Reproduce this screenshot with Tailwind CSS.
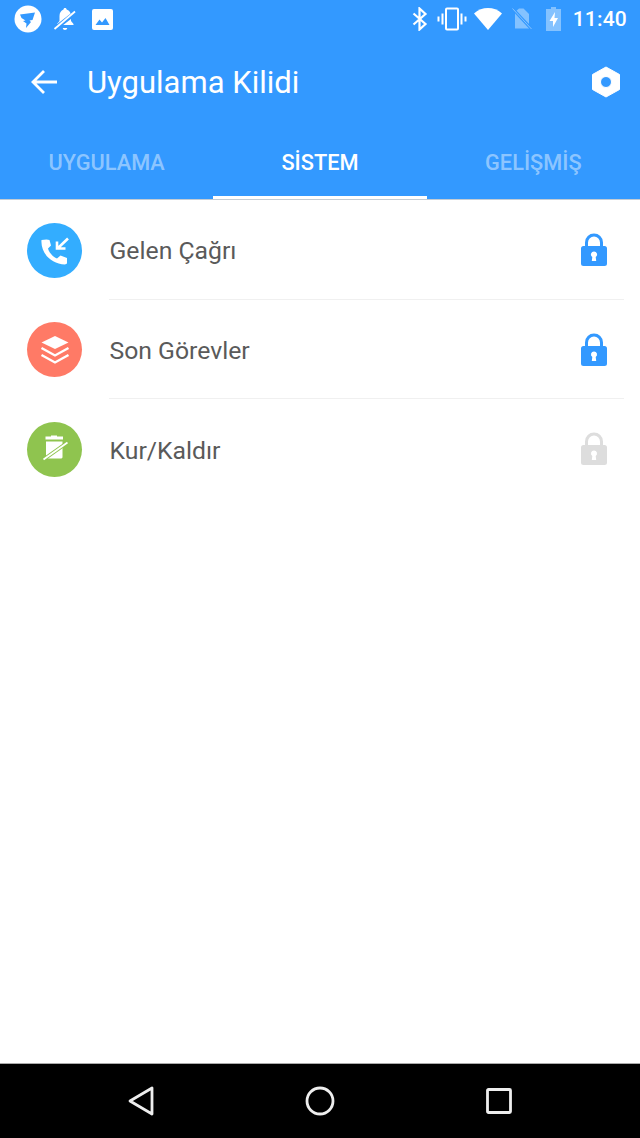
<!DOCTYPE html>
<html lang="tr">
<head>
  <meta charset="UTF-8" />
  <title>Uygulama Kilidi</title>
  <script src="https://cdn.jsdelivr.net/npm/@tailwindcss/browser@4"></script>
</head>
<body class="bg-white font-['Roboto',sans-serif]">
<div class="flex flex-col h-[1138px] w-[640px] overflow-hidden">

  <!-- header -->
  <header class="bg-[#3399ff] h-[199px] shrink-0 flex flex-col">
    <!-- status bar -->
    <div class="h-[38px] flex items-center pl-[14px] pr-[13px] text-white">
      <svg class="w-7 h-7" viewBox="0 0 28 28"><circle cx="14" cy="14" r="13.5" fill="#fff"/><path d="M6 9.500 21 7.500 18.500 15 15.500 15.500 17 17 12 23 12.500 18.500 9 16 11.500 15.500 7.500 13Z" fill="#3399ff"/></svg>
      <svg class="w-[24px] h-[28px] ml-[11px]" viewBox="0 0 24 28" fill="#fff"><path d="M12 3c1 0 1.600.7 1.600 1.600 3 .8 4.400 3.400 4.400 6.400v5l2.500 3v1H4v-1l2.500-3v-5c0-3 1.500-5.600 4-6.400C10.500 3.700 11 3 12 3ZM9.800 23h4.400c0 1.200-1 2-2.200 2s-2.200-.8-2.200-2Z"/><path d="M1.500 24 22 8" stroke="#3399ff" stroke-width="4.500"/><path d="M1.500 24 22 6.500" stroke="#fff" stroke-width="1.800"/></svg>
      <svg class="w-[21px] h-[21px] ml-[15px]" viewBox="0 0 21 21"><rect width="21" height="21" rx="2" fill="#fff"/><path d="M3.500 16 7.500 10.500 10 13.500 13.500 9 17.500 16Z" fill="#3399ff"/></svg>
      <div class="flex-1"></div>
      <svg class="w-[16px] h-[24px]" viewBox="0 0 16 24" fill="none" stroke="#fff" stroke-width="2.200"><path d="M1.500 6.500 13.500 17 7.500 22.500V1.500L13.500 7 1.500 17.500"/></svg>
      <svg class="w-[30px] h-[24px] ml-[9px]" viewBox="0 0 30 24" fill="none" stroke="#fff"><rect x="9" y="1.500" width="12" height="21" rx="1" stroke-width="2"/><path d="M5.500 6.500V17.500M1.500 9.500V14.500M24.500 6.500V17.500M28.500 9.500V14.500" stroke-width="2"/></svg>
      <svg class="w-[28px] h-[22px] ml-[7px]" viewBox="0 0 28 22"><path d="M0 5.500C8-1.800 20-1.800 28 5.500L14 22Z" fill="#fff"/></svg>
      <svg class="w-[20px] h-[22px] ml-[10px]" viewBox="0 0 20 22"><path d="M3 4V20.500H17V6L11.500 .5H7Z" fill="#fff" fill-opacity=".4"/><path d="M.5 .5 19.500 21" stroke="#3399ff" stroke-width="3"/><path d="M.5 .5 19.500 21" stroke="#fff" stroke-opacity=".4" stroke-width="1"/></svg>
      <svg class="w-[15px] h-[24px] ml-[14px]" viewBox="0 0 15 24"><path d="M5 0H10V2H15V24H0V2H5Z" fill="#fff" fill-opacity=".4"/><path d="M9 5 3.500 14H7V20L12 11H8.500Z" fill="#fff"/></svg>
      <span class="ml-[12px] text-[21px] leading-none font-medium tracking-[0.2px]">11:40</span>
    </div>

    <!-- toolbar -->
    <div class="h-[88px] flex items-center pl-[31px] pr-[19px] text-white">
      <svg class="w-[26px] h-[26px]" viewBox="0 0 26 26" fill="none" stroke="#fff" stroke-width="2.800"><path d="M26 13H2M13 2 2 13 13 24"/></svg>
      <h1 class="ml-[30px] text-[31px] leading-none">Uygulama Kilidi</h1>
      <div class="flex-1"></div>
      <svg class="w-[30px] h-[32px]" viewBox="0 0 30 32"><path fill-rule="evenodd" d="M15 1 28.500 8.500V23.500L15 31 1.500 23.500V8.500ZM15 10.500A5.500 5.500 0 1 0 15 21.500 5.500 5.500 0 1 0 15 10.500Z" fill="#fff" stroke="#fff" stroke-linejoin="round"/></svg>
    </div>

    <!-- tabs -->
    <nav class="flex-1 grid grid-cols-3 text-[21.75px] font-medium">
      <div class="flex items-start justify-center pt-[21px] text-white/45">UYGULAMA</div>
      <div class="flex items-start justify-center pt-[21px] text-white border-b-[3px] border-white">SİSTEM</div>
      <div class="flex items-start justify-center pt-[21px] text-white/45">GELİŞMİŞ</div>
    </nav>
  </header>

  <!-- list -->
  <main class="flex-1 bg-white border-t border-[#c4ccd4]">
    <div class="h-[100px] flex items-center pl-[27px] pr-[16px]">
      <div class="w-[55px] h-[55px] rounded-full bg-[#33adff] flex items-center justify-center shrink-0">
        <svg class="w-[30px] h-[30px]" viewBox="0 0 30 30" fill="#fff"><path d="M6.500 4.500 1.500 5C.5 17 10 29 25 29.500L27 28.500V23L20.500 20.500 17 23.500C13 22 9 17.500 8 13.500L11 10.500 9.500 5Z"/><path d="M28 3.500 17.500 13.500M17 6.500V13.500H25.500" fill="none" stroke="#fff" stroke-width="2.600"/></svg>
      </div>
      <div class="ml-[27.500px] pt-[2px] flex-1 text-[24.750px] text-[#5a5a5a]">Gelen Çağrı</div>
      <svg class="w-[26px] h-[34px] mr-[17px]" viewBox="0 0 26 34"><path d="M5.500 15V9.500C5.500 5 9 2 13 2S20.500 5 20.500 9.500V15" fill="none" stroke="#3399ff" stroke-width="3"/><path fill-rule="evenodd" d="M2.500 13H23.500A2.500 2.500 0 0 1 26 15.500V30.500A2.500 2.500 0 0 1 23.500 33H2.500A2.500 2.500 0 0 1 0 30.500V15.500A2.500 2.500 0 0 1 2.500 13ZM13 18.500A3 3 0 0 0 11.300 24L10.800 28H15.200L14.700 24A3 3 0 0 0 13 18.500Z" fill="#3399ff"/></svg>
    </div>
    <div class="ml-[109px] mr-[16px] border-t border-[#f0f0f0] -mt-px"></div>
    <div class="h-[98px] flex items-center pl-[27px] pr-[16px]">
      <div class="w-[55px] h-[55px] rounded-full bg-[#ff7a66] flex items-center justify-center shrink-0">
        <svg class="w-[32px] h-[32px]" viewBox="0 0 32 32" fill="#fff"><path d="M16 3 29.500 9.500 16 16 2.500 9.500Z"/><path d="M2.500 15 16 22.500 29.500 15M2.500 22 16 29.500 29.500 22" fill="none" stroke="#fff" stroke-width="2.400"/></svg>
      </div>
      <div class="ml-[27.500px] pt-[4px] flex-1 text-[24.750px] text-[#5a5a5a]">Son Görevler</div>
      <svg class="w-[26px] h-[34px] mr-[17px] mt-[2px]" viewBox="0 0 26 34"><path d="M5.500 15V9.500C5.500 5 9 2 13 2S20.500 5 20.500 9.500V15" fill="none" stroke="#3399ff" stroke-width="3"/><path fill-rule="evenodd" d="M2.500 13H23.500A2.500 2.500 0 0 1 26 15.500V30.500A2.500 2.500 0 0 1 23.500 33H2.500A2.500 2.500 0 0 1 0 30.500V15.500A2.500 2.500 0 0 1 2.500 13ZM13 18.500A3 3 0 0 0 11.300 24L10.800 28H15.200L14.700 24A3 3 0 0 0 13 18.500Z" fill="#3399ff"/></svg>
    </div>
    <div class="ml-[109px] mr-[16px] border-t border-[#f0f0f0]"></div>
    <div class="h-[100px] flex items-center pl-[27px] pr-[16px]">
      <div class="w-[55px] h-[55px] rounded-full bg-[#8fc44f] flex items-center justify-center shrink-0">
        <svg class="w-[30px] h-[30px]" viewBox="0 0 30 30" fill="#fff"><path d="M9 2.500H11V1.500H17V2.500H23V5.500H5.500V2.500ZM6 7.500H22.500V23.500L21.500 24.500H7L6 23.500Z"/><path d="M3.500 25.500 27.500 8.500" stroke="#8fc44f" stroke-width="3.600"/><path d="M3.500 25.500 27.500 8.500" stroke="#fff" stroke-width="1.800"/></svg>
      </div>
      <div class="ml-[27.500px] pt-[4px] flex-1 text-[24.750px] text-[#5a5a5a]">Kur/Kaldır</div>
      <svg class="w-[26px] h-[34px] mr-[17px]" viewBox="0 0 26 34"><path d="M5.500 15V9.500C5.500 5 9 2 13 2S20.500 5 20.500 9.500V15" fill="none" stroke="#dddddd" stroke-width="3"/><path fill-rule="evenodd" d="M2.500 13H23.500A2.500 2.500 0 0 1 26 15.500V30.500A2.500 2.500 0 0 1 23.500 33H2.500A2.500 2.500 0 0 1 0 30.500V15.500A2.500 2.500 0 0 1 2.500 13ZM13 18.500A3 3 0 0 0 11.300 24L10.800 28H15.200L14.700 24A3 3 0 0 0 13 18.500Z" fill="#dddddd"/></svg>
    </div>
  </main>

  <!-- nav bar -->
  <footer class="h-[75px] shrink-0 bg-black border-t border-[#aaaaaa] grid grid-cols-3 items-center px-[51px]">
    <div class="flex justify-center">
      <svg class="w-[26px] h-[30px]" viewBox="0 0 26 30" fill="none" stroke="#eeeeee" stroke-width="2.800" stroke-linejoin="round"><path d="M24 2V28L2 15Z"/></svg>
    </div>
    <div class="flex justify-center">
      <svg class="w-[30px] h-[30px]" viewBox="0 0 30 30" fill="none" stroke="#eeeeee" stroke-width="2.800"><circle cx="15" cy="15" r="13"/></svg>
    </div>
    <div class="flex justify-center">
      <svg class="w-[26px] h-[26px]" viewBox="0 0 26 26" fill="none" stroke="#eeeeee" stroke-width="2.800" stroke-linejoin="round"><rect x="1.500" y="1.500" width="23" height="23" rx="1"/></svg>
    </div>
  </footer>
</div>
</body>
</html>
